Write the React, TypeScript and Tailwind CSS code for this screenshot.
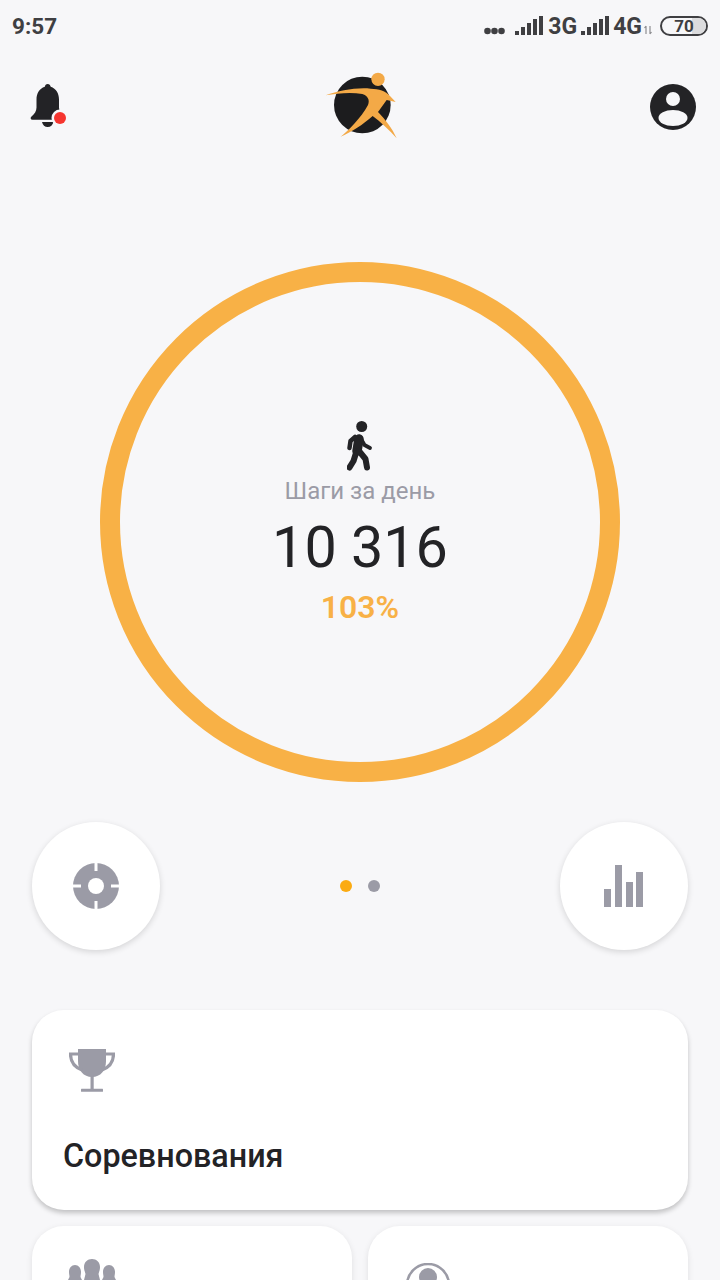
const GREY = '#9b9ba6';
const DARK = '#232326';

function SignalBars() {
  return (
    <svg width="28" height="20" viewBox="0 0 28 20" fill="#3f3f42">
      <rect x="0" y="15" width="4" height="4" />
      <rect x="6" y="11" width="4" height="8" />
      <rect x="12" y="7" width="4" height="12" />
      <rect x="18" y="3" width="4" height="16" />
      <rect x="24" y="0" width="4" height="19" />
    </svg>
  );
}

function StatusBar() {
  return (
    <div className="flex h-[52px] items-center justify-between px-3 text-[#3f3f42]">
      <span className="mt-[2px] text-[22.5px] font-bold">9:57</span>
      <div className="flex items-center">
        <svg width="21" height="8" viewBox="0 0 21 8" fill="#3f3f42" className="mt-[10px] mr-[10px]">
          <circle cx="3.5" cy="4" r="3.3" />
          <circle cx="10.500" cy="4" r="3.3" />
          <circle cx="17.500" cy="4" r="3.3" />
        </svg>
        <SignalBars />
        <span className="ml-[5px] text-[23px] leading-none font-bold">3G</span>
        <div className="ml-1">
          <SignalBars />
        </div>
        <span className="ml-1 text-[23px] leading-none font-bold">4G</span>
        <svg width="8" height="10" viewBox="0 0 8 10" stroke="#8d8d90" strokeWidth="1.2" fill="none" className="mt-2 ml-[2px]">
          <path d="M2 9V1M0.5 3L2 1M6 1v8M7.5 7L6 9" />
        </svg>
        <div className="relative ml-2 flex h-5 w-[48px] items-center justify-center overflow-hidden rounded-full border-2 border-[#3f3f42]">
          <div className="absolute top-0 right-0 bottom-0 w-[14px] bg-[#dcdcde]" />
          <span className="relative text-[17px] leading-none font-bold">70</span>
        </div>
      </div>
    </div>
  );
}

function Bell() {
  return (
    <svg width="38" height="44" viewBox="0 0 38 44">
      <path
        fill={DARK}
        d="M17.7 0c-1.6 0-2.7 1.100-2.900 2.800C9.300 4.600 6.500 9.500 6.500 15.500v8c0 3.500-2 6.500-5 9-1.500 1.300-1 3.200 1 3.200h30.500c2 0 2.500-1.900 1-3.200-3-2.500-5-5.500-5-9v-8c0-6-2.800-10.900-8.300-12.700C20.400 1.100 19.300 0 17.700 0zM12 38c.6 3 2.800 5 5.700 5s5.100-2 5.700-5H12z"
      />
      <circle cx="30" cy="34" r="8.500" fill="#f7f7f9" />
      <circle cx="30" cy="34" r="6" fill="#f6352f" />
    </svg>
  );
}

function Logo() {
  return (
    <svg width="75" height="70" viewBox="130 60 225 210">
      <circle cx="245" cy="165" r="85" fill="#1c1c1e" />
      <circle cx="292" cy="88" r="20" fill="#f3a947" />
      <path
        fill="#f3a947"
        d="M135 136C175 122 225 112 270 116C295 117 315 122 328 138L345 156L318 150L292 186C315 210 335 235 348 265C325 240 300 215 276 198C245 225 215 245 180 260C205 240 240 205 262 165C268 150 262 138 245 132C210 126 170 130 135 136Z"
      />
    </svg>
  );
}

function Avatar() {
  return (
    <svg width="46" height="46" viewBox="0 0 46 46">
      <circle cx="23" cy="23" r="23" fill={DARK} />
      <circle cx="23" cy="15" r="7" fill="#f7f7f9" />
      <ellipse cx="23" cy="34" rx="14.500" ry="8" fill="#f7f7f9" />
    </svg>
  );
}

function Walker() {
  return (
    <svg width="26" height="50" viewBox="0 0 26 50" fill="none" stroke={DARK} strokeLinecap="round" strokeLinejoin="round">
      <circle cx="14.700" cy="5.500" r="5.500" fill={DARK} stroke="none" />
      <path d="M12 18L10 30" strokeWidth="9.500" />
      <path d="M9 32L6.500 40L2.500 46.500" strokeWidth="6" />
      <path d="M12 30L18.500 38L20 46.500" strokeWidth="6" />
      <path d="M13 16L17.500 24L23 27" strokeWidth="3.800" />
      <path d="M8 16L3.500 20L2.500 27" strokeWidth="4.500" />
    </svg>
  );
}

function Target() {
  return (
    <svg width="46" height="46" viewBox="0 0 46 46">
      <circle cx="23" cy="23" r="23" fill={GREY} />
      <circle cx="23" cy="23" r="8" fill="#fff" />
      <path d="M23 0v8M23 38v8M0 23h8M38 23h8" stroke="#fff" strokeWidth="3" />
    </svg>
  );
}

function Bars() {
  return (
    <svg width="40" height="42" viewBox="0 0 40 42" fill={GREY}>
      <rect x="0" y="24" width="7" height="18" />
      <rect x="11" y="0" width="7" height="42" />
      <rect x="22" y="17" width="7" height="25" />
      <rect x="32" y="7" width="7" height="35" />
    </svg>
  );
}

function Trophy() {
  return (
    <svg width="46" height="43" viewBox="0 0 46 43" fill={GREY}>
      <path d="M9 0h28v12c0 9.500-5.500 16-14 16S9 21.500 9 12V0z" />
      <path d="M9 5H1.500C1.500 13 5 18 13 21M37 5h7.500C44.500 13 41 18 33 21" fill="none" stroke={GREY} strokeWidth="3.200" />
      <rect x="21.500" y="26" width="3.200" height="14" />
      <rect x="12" y="39.800" width="22" height="3" rx="0.500" />
    </svg>
  );
}

function Team() {
  return (
    <svg width="48" height="21" viewBox="0 0 48 21" fill={GREY}>
      <path d="M7 6C10.500 6 13 9 13 13C13 15 12.500 16.500 12.500 18L14 21H0L1.500 18C1.500 16.500 1 15 1 13C1 9 3.500 6 7 6Z" />
      <path d="M41 6C37.500 6 35 9 35 13C35 15 35.500 16.500 35.500 18L34 21H48L46.500 18C46.500 16.500 47 15 47 13C47 9 44.500 6 41 6Z" />
      <path d="M24 0C28.500 0 32 3 32 8C32 11 31 13 30.500 15L32 21H16L17.500 15C17 13 16 11 16 8C16 3 19.500 0 24 0Z" />
    </svg>
  );
}

function PersonCircle() {
  return (
    <svg width="44" height="17" viewBox="0 0 44 17" fill="none">
      <circle cx="22" cy="22" r="21" stroke={GREY} strokeWidth="2.500" />
      <circle cx="22" cy="14" r="9" fill={GREY} />
    </svg>
  );
}

export default function App() {
  return (
    <div className="h-[1280px] w-[720px] overflow-hidden bg-[#f7f7f9] font-['Roboto',sans-serif]">
      <StatusBar />

      <div className="mt-[18px] grid h-[70px] grid-cols-[1fr_auto_1fr] items-center pr-6 pl-[30px]">
        <div className="mt-[2px]">
          <Bell />
        </div>
        <div className="-ml-1">
          <Logo />
        </div>
        <div className="mt-1 flex justify-end">
          <Avatar />
        </div>
      </div>

      {/* Daily steps ring */}
      <div className="mx-auto mt-[122px] flex h-[520px] w-[520px] flex-col items-center rounded-full border-[20px] border-[#f8b146] pt-[139px]">
        <Walker />
        <div className="mt-[5px] text-[24px] leading-[30px] text-[#9b9ba6]">Шаги за день</div>
        <div className="mt-[9px] text-[57.5px] leading-[66px] text-[#232326]">10 316</div>
        <div className="mt-[6px] text-[32px] leading-[40px] font-semibold text-[#f8b146]">103%</div>
      </div>

      <div className="mt-10 flex items-center justify-between px-8">
        <button className="flex h-32 w-32 items-center justify-center rounded-full bg-white shadow-[0_2px_6px_rgba(0,0,0,0.14)]">
          <Target />
        </button>
        <div className="flex gap-4">
          <span className="h-3 w-3 rounded-full bg-[#fbab12]" />
          <span className="h-3 w-3 rounded-full bg-[#9b9ba6]" />
        </div>
        <button className="flex h-32 w-32 items-center justify-center rounded-full bg-white shadow-[0_2px_6px_rgba(0,0,0,0.14)]">
          <Bars />
        </button>
      </div>

      <div className="mx-8 mt-[60px] h-[200px] rounded-[32px] bg-white pt-[39px] pl-[37px] shadow-[0_3px_5px_rgba(0,0,0,0.22)]">
        <Trophy />
        <div className="mt-[42px] -ml-[6px] text-[32.3px] leading-[44px] font-medium text-[#232326]">Соревнования</div>
      </div>

      <div className="mx-8 mt-4 grid grid-cols-2 gap-4">
        <div className="h-[200px] rounded-[32px] bg-white pt-[33px] pl-9 shadow-[0_2px_6px_rgba(0,0,0,0.1)]">
          <Team />
        </div>
        <div className="h-[200px] rounded-[32px] bg-white pt-[37px] pl-[38px] shadow-[0_2px_6px_rgba(0,0,0,0.1)]">
          <PersonCircle />
        </div>
      </div>
    </div>
  );
}
